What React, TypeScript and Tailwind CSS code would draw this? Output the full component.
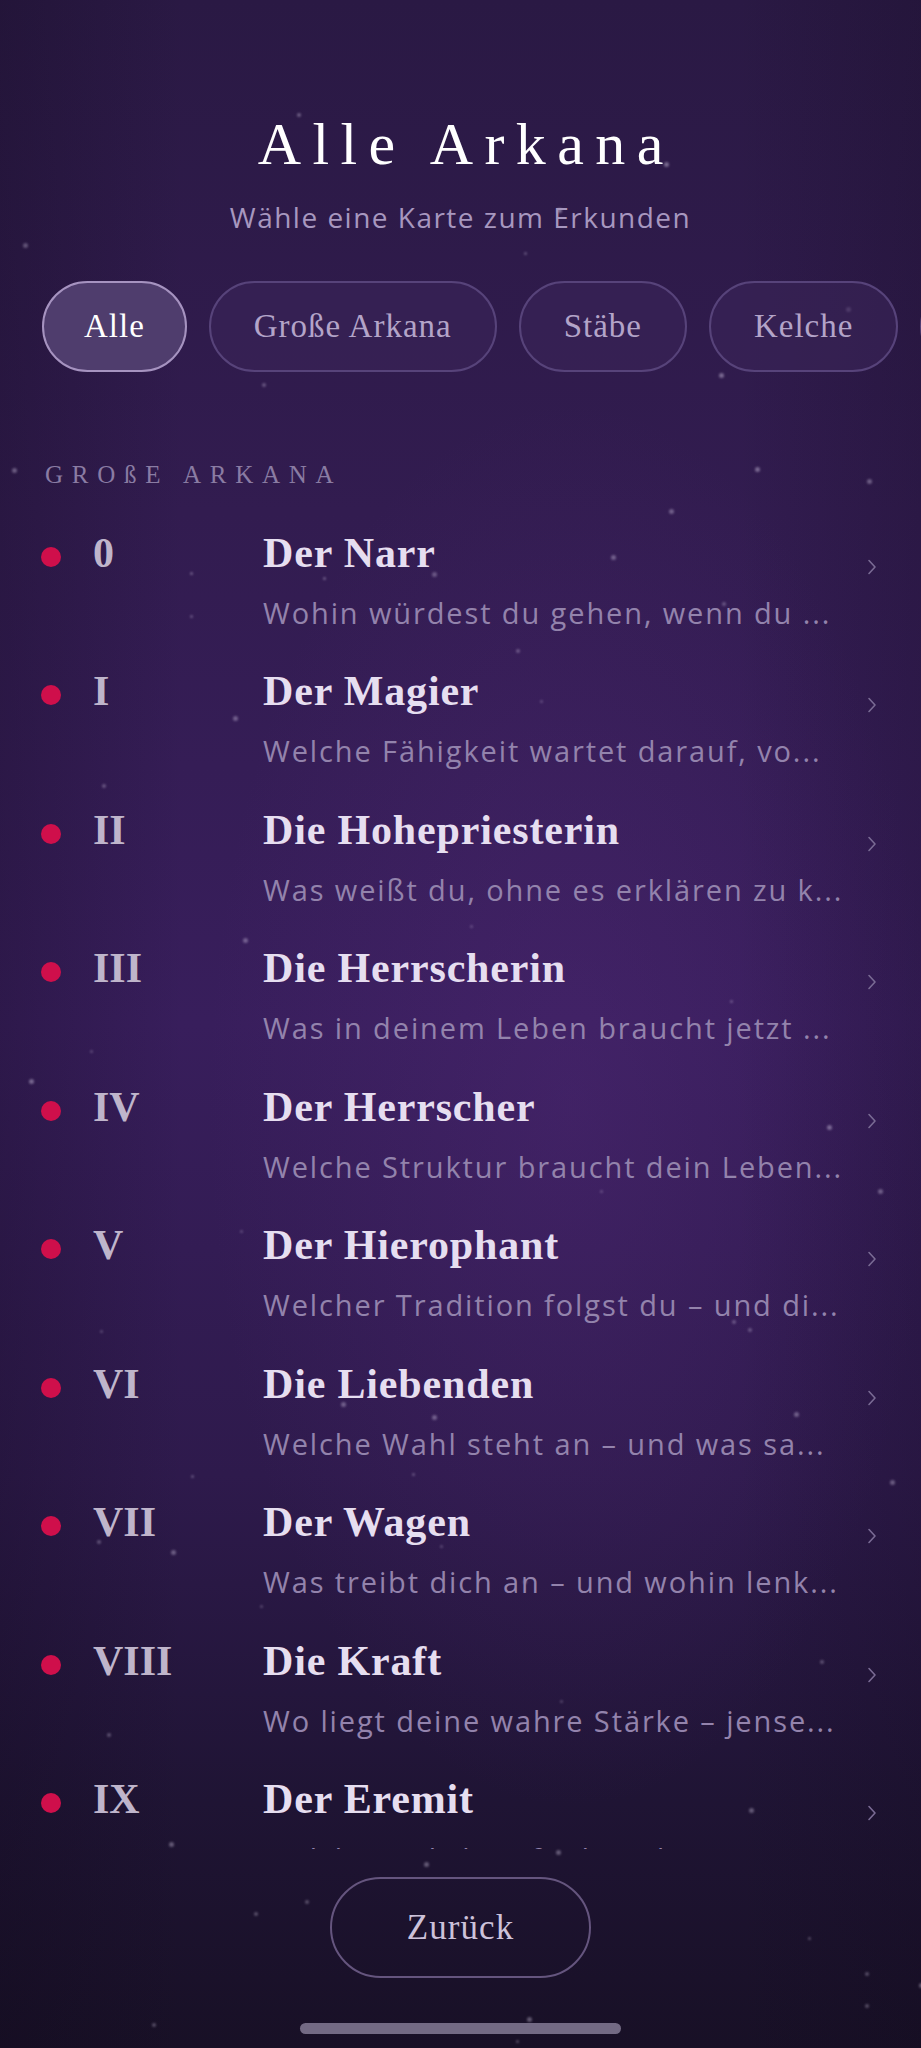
import React from "react";

const serif = "font-['Liberation_Serif',serif]";
const sans = "font-['Open_Sans',sans-serif]";

const filters = ["Alle", "Große Arkana", "Stäbe", "Kelche", "Schwerter"];

const cards = [
	{ num: "0", name: "Der Narr", text: "Wohin würdest du gehen, wenn du ..." },
	{ num: "I", name: "Der Magier", text: "Welche Fähigkeit wartet darauf, vo..." },
	{ num: "II", name: "Die Hohepriesterin", text: "Was weißt du, ohne es erklären zu k..." },
	{ num: "III", name: "Die Herrscherin", text: "Was in deinem Leben braucht jetzt ..." },
	{ num: "IV", name: "Der Herrscher", text: "Welche Struktur braucht dein Leben..." },
	{ num: "V", name: "Der Hierophant", text: "Welcher Tradition folgst du – und di..." },
	{ num: "VI", name: "Die Liebenden", text: "Welche Wahl steht an – und was sa..." },
	{ num: "VII", name: "Der Wagen", text: "Was treibt dich an – und wohin lenk..." },
	{ num: "VIII", name: "Die Kraft", text: "Wo liegt deine wahre Stärke – jense..." },
	{ num: "IX", name: "Der Eremit", text: "Welche Wahrheit findest du nur in ..." },
];

// [x, y, size, opacity]
const stars: [number, number, number, number][] = [
	[297, 113, 4, 0.35], [664, 162, 5, 0.4], [557, 208, 5, 0.45], [23, 243, 5, 0.3], [524, 252, 3, 0.3],
	[846, 307, 5, 0.35], [719, 373, 5, 0.4], [262, 383, 4, 0.3], [12, 468, 5, 0.35], [755, 467, 5, 0.4],
	[867, 479, 5, 0.35], [669, 509, 5, 0.35], [611, 555, 5, 0.35], [432, 572, 5, 0.3], [190, 572, 3, 0.35],
	[323, 577, 3, 0.35], [722, 602, 4, 0.3], [190, 615, 3, 0.3], [516, 649, 4, 0.3], [233, 716, 5, 0.35],
	[540, 700, 3, 0.25], [102, 784, 4, 0.3], [243, 938, 5, 0.35], [470, 925, 3, 0.25], [29, 1079, 5, 0.4],
	[90, 1050, 3, 0.25], [730, 1000, 3, 0.3], [827, 1125, 5, 0.4], [878, 1189, 5, 0.35], [600, 1190, 3, 0.25],
	[240, 1230, 3, 0.25], [732, 1320, 4, 0.3], [748, 1328, 4, 0.3], [100, 1330, 3, 0.25], [341, 1402, 5, 0.35],
	[432, 1415, 5, 0.35], [794, 1412, 5, 0.35], [191, 1475, 3, 0.3], [412, 1473, 3, 0.3], [890, 1480, 5, 0.35],
	[97, 1540, 4, 0.3], [171, 1550, 5, 0.35], [523, 1580, 4, 0.3], [440, 1545, 3, 0.25], [260, 1605, 3, 0.25],
	[820, 1660, 4, 0.3], [560, 1700, 3, 0.25], [107, 1733, 4, 0.3], [749, 1808, 5, 0.35], [169, 1842, 5, 0.35],
	[556, 1850, 5, 0.35], [424, 1862, 5, 0.35], [305, 1900, 4, 0.3], [254, 1912, 4, 0.3], [808, 1937, 3, 0.3],
	[865, 1972, 4, 0.3], [919, 1983, 5, 0.35], [865, 2004, 4, 0.3], [527, 2017, 5, 0.35], [152, 2023, 4, 0.3],
	[516, 2040, 3, 0.3],
];

function Chevron() {
	return (
		<svg width="10" height="16" viewBox="0 0 10 16" className="shrink-0 mt-[27px]">
			<polyline points="2,1.5 8,8 2,14.5" fill="none" stroke="#7a6b94" strokeWidth="1.6" strokeLinecap="round" strokeLinejoin="round" />
		</svg>
	);
}

function CardRow({ num, name, text }: { num: string; name: string; text: string }) {
	return (
		<div className="flex items-start h-[138.5px] shrink-0 pl-[41px] pr-[44px]">
			<div className="w-[20px] h-[20px] rounded-full bg-[#cf0f4b] mt-[15px] shrink-0" />
			<div className={`${serif} font-bold text-[42px] leading-none text-[#bfb5cb] w-[170px] ml-[32px] shrink-0`}>{num}</div>
			<div className="flex-1 min-w-0 flex flex-col">
				<div className={`${serif} font-bold text-[42px] leading-none tracking-[0.02em] text-[#e6def0] whitespace-nowrap`}>{name}</div>
				<div className={`${sans} text-[29px] leading-none tracking-[0.065em] text-[#9383ac] mt-[24px] whitespace-nowrap`}>{text}</div>
			</div>
			<div className="ml-[6px]">
				<Chevron />
			</div>
		</div>
	);
}

export default function App() {
	return (
		<div className="relative w-full h-[2048px] overflow-hidden flex flex-col bg-[linear-gradient(180deg,#2a1944_0%,#321c50_25%,#381e5c_50%,#2e1a4c_72%,#1f1434_88%,#181026_100%)]">
			<div className="absolute inset-0 pointer-events-none bg-[radial-gradient(ellipse_at_62%_54%,rgba(90,45,130,0.3)_0%,rgba(90,45,130,0)_45%)]" />
			<div className="absolute inset-0 pointer-events-none bg-[linear-gradient(90deg,rgba(15,8,25,0.25)_0%,rgba(15,8,25,0)_20%,rgba(15,8,25,0)_80%,rgba(15,8,25,0.2)_100%)]" />
			{stars.map(([x, y, s, o], i) => (
				<div
					key={i}
					className="absolute rounded-full bg-[#e6dcf5] blur-[1px] pointer-events-none"
					style={{ left: x, top: y, width: s, height: s, opacity: o }}
				/>
			))}

			<div className="relative flex flex-col flex-1">
				<h1 className={`${serif} text-[60px] leading-none tracking-[0.19em] text-white text-center pt-[114px] pl-[0.19em]`}>Alle Arkana</h1>
				<p className={`${sans} text-[28px] leading-none tracking-[0.053em] text-[#a797bf] text-center mt-[29px]`}>Wähle eine Karte zum Erkunden</p>

				<div className="flex gap-[22px] pl-[42px] mt-[50px] overflow-hidden">
					{filters.map((f, i) => (
						<div
							key={f}
							className={`shrink-0 h-[91px] rounded-full border-2 flex items-center justify-center ${serif} text-[33px] leading-none tracking-[0.03em] ${
								i === 0 ? "px-[40px] bg-[#4f3d6d] border-[#a693c0] text-white" : "px-[43px] bg-[#3a2558]/60 border-[#57437a] text-[#b3a4c8]"
							}`}
						>
							{f}
						</div>
					))}
				</div>

				<div className="h-[1477px] overflow-hidden flex flex-col">
					<div className={`${serif} text-[25px] leading-none tracking-[0.35em] text-[#8a7ca3] pl-[45px] mt-[90px]`}>GROßE ARKANA</div>
					<div className="flex flex-col mt-[44.6px]">
						{cards.map((c) => (
							<CardRow key={c.num} {...c} />
						))}
					</div>
				</div>

				<div className="flex justify-center mt-[28px]">
					<button className={`w-[261px] h-[101px] rounded-full border-2 border-[#65557e] bg-transparent ${serif} text-[35px] leading-none tracking-[0.03em] text-[#cdc2da]`}>
						Zurück
					</button>
				</div>

				<div className="flex justify-center mt-[45px]">
					<div className="w-[321px] h-[11px] rounded-full bg-[#736a84]" />
				</div>
			</div>
		</div>
	);
}
